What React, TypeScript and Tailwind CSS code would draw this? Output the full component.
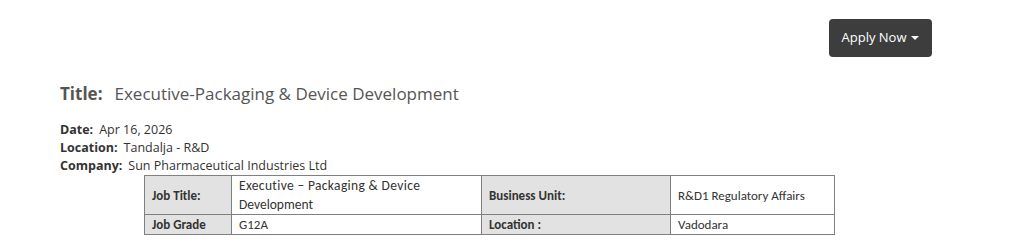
const cell = "border border-[#808080] px-[7px] align-middle";

export default function App() {
  return (
    <div className="w-[1024px] h-[251px] bg-white overflow-hidden font-['Open_Sans',sans-serif] text-[#333]">
      <div className="flex justify-end pr-[92px] pt-[19px]">
        <button className="h-[38px] w-[103px] rounded-[4px] bg-[#3d3d3d] text-white text-[13px] flex items-center justify-center gap-[5px]">
          Apply Now
          <span className="w-0 h-0 border-l-[4px] border-r-[4px] border-t-[4px] border-l-transparent border-r-transparent border-t-white" />
        </button>
      </div>
      <div className="pl-[60px] pt-[26px]">
        <h1 className="text-[17px] leading-[22px] text-[#555]">
          <span className="font-bold">Title:</span>
          <span className="ml-[12px]">Executive-Packaging &amp; Device Development</span>
        </h1>
        <div className="mt-[16px] text-[12.5px] leading-[18px]">
          <div><span className="font-bold">Date:</span><span className="ml-[6px]">Apr 16, 2026</span></div>
          <div><span className="font-bold">Location:</span><span className="ml-[6px]">Tandalja - R&amp;D</span></div>
          <div><span className="font-bold">Company:</span><span className="ml-[6px]">Sun Pharmaceutical Industries Ltd</span></div>
        </div>
      </div>
      <table className="ml-[144px] border-collapse text-[13px] leading-[19px] text-[#333] font-['Carlito','Lato',sans-serif]">
        <tbody>
          <tr className="h-[39px]">
            <td className={`${cell} w-[87px] bg-[#e2e2e2] font-bold`}>Job Title:</td>
            <td className={`${cell} w-[250px] text-[13.5px]`}>
              <span className="tracking-[0.35px]">Executive – Packaging &amp; Device</span>
              <br />
              Development
            </td>
            <td className={`${cell} w-[189px] bg-[#e2e2e2] font-bold`}>Business Unit:</td>
            <td className={`${cell} w-[164px]`}>R&amp;D1 Regulatory Affairs</td>
          </tr>
          <tr className="h-[20px]">
            <td className={`${cell} bg-[#e2e2e2] font-bold`}>Job Grade</td>
            <td className={cell}>G12A</td>
            <td className={`${cell} bg-[#e2e2e2] font-bold`}>Location :</td>
            <td className={cell}>Vadodara</td>
          </tr>
        </tbody>
      </table>
    </div>
  );
}
